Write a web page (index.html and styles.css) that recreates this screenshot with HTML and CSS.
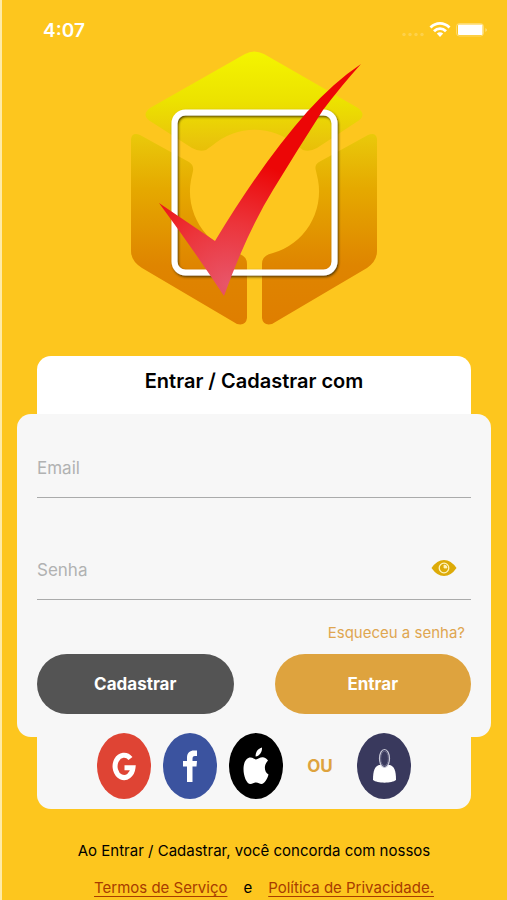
FILE: index.html
```html
<!DOCTYPE html>
<html lang="pt-BR">
<head>
<meta charset="utf-8">
<meta name="viewport" content="width=device-width, initial-scale=1">
<title>Entrar / Cadastrar</title>
<link rel="stylesheet" href="styles.css">
</head>
<body>
<header class="status">
  <span class="status-time">4:07</span>
  <svg class="status-icons" viewBox="0 0 88 20" width="88" height="20" aria-hidden="true">
    <g fill="#fff" opacity=".2">
      <circle cx="3" cy="14.500" r="1.700"/><circle cx="9" cy="14.500" r="1.700"/><circle cx="15" cy="14.500" r="1.700"/><circle cx="21" cy="14.500" r="1.700"/>
    </g>
    <g fill="none" stroke="#fff" stroke-width="2.800">
      <path d="M29.500 7.500C35 2 43 2 48.500 7.500"/>
      <path d="M33 11.300C36.500 7.800 41.500 7.800 45 11.300"/>
    </g>
    <path d="M35.800 13.600Q39 11 42.200 13.600L39 17Z" fill="#fff"/>
    <rect x="55.500" y="3.500" width="27" height="12.500" rx="3" fill="none" stroke="#fff" opacity=".35"/>
    <rect x="57" y="4.500" width="24.500" height="10.500" rx="1" fill="#fff"/>
    <path d="M84.500 8Q87 10 84.500 12Z" fill="#fff" opacity=".5"/>
  </svg>
</header>
<main class="screen">
  <svg class="logo" viewBox="119 48 270 280" role="img" aria-label="Logo">
    <defs>
      <linearGradient id="cube" gradientUnits="userSpaceOnUse" x1="0" y1="52" x2="0" y2="325">
        <stop offset="0" stop-color="#f4f400"/>
        <stop offset=".18" stop-color="#ece200"/>
        <stop offset=".32" stop-color="#e9c60a"/>
        <stop offset=".5" stop-color="#e5a900"/>
        <stop offset=".78" stop-color="#df8500"/>
        <stop offset="1" stop-color="#df7e00"/>
      </linearGradient>
      <radialGradient id="tick" gradientUnits="userSpaceOnUse" cx="228" cy="285" r="125">
        <stop offset="0" stop-color="#e8566a"/>
        <stop offset=".5" stop-color="#ec343a"/>
        <stop offset="1" stop-color="#ec0606"/>
      </radialGradient>
      <filter id="shade" x="-10%" y="-10%" width="120%" height="120%">
        <feDropShadow dx="1" dy="1.500" stdDeviation="0.800" flood-color="#3a2a00" flood-opacity=".85"/>
      </filter>
    </defs>
    <g fill="url(#cube)">
      <path d="M245 54Q254 49 264 54L358 108Q367 115 358 121L317 148Q310 152 303 150L296 145A64 64 0 0 0 213 145L206 150Q199 152 192 148L150 121Q141 115 150 108Z"/>
      <path d="M131 139Q132 132 140 135L189 162Q194 165 193 171L191 180A64 64 0 0 0 236 253Q247 255 247 264V318Q246 326 237 324L142 268Q131 261 131 251Z"/>
      <path d="M377 139Q376 132 368 135L319 162Q314 165 316 171L318 180A64 64 0 0 1 273 253Q262 255 262 264V318Q263 326 272 324L367 268Q377 261 377 251Z"/>
    </g>
    <rect x="174.500" y="112.500" width="160" height="160" rx="11" fill="none" stroke="#fff" stroke-width="6" filter="url(#shade)"/>
    <path fill="url(#tick)" d="M361 64Q334 82 307 112Q262 163 215 241L159 203Q193 249 224 296Q247 232 273 190Q298 149 323 110Q342 85 361 64Z"/>
  </svg>

  <form class="card">
    <h1 class="card-title">Entrar / Cadastrar com</h1>
    <div class="panel">
      <div class="field">
        <input type="email" aria-label="Email" placeholder="Email">
      </div>
      <div class="field">
        <input type="password" aria-label="Senha" placeholder="Senha">
        <button class="reveal" type="button" aria-label="Mostrar senha">
          <svg viewBox="0 0 26 18" width="26" height="18">
            <path d="M0.500 9Q6 1 13 1T25.500 9Q20 17 13 17T0.500 9Z" fill="#ddab08"/>
            <circle cx="13" cy="9" r="4.800" fill="#ddab08" stroke="#fff3bd" stroke-width="1.300"/>
            <path d="M13 6V9H16A3 3 0 0 0 13 6Z" fill="#fff3bd" stroke="#fff3bd" stroke-width=".8"/>
          </svg>
        </button>
      </div>
      <a class="forgot" href="#">Esqueceu a senha?</a>
      <div class="actions">
        <button class="btn btn-dark" type="button">Cadastrar</button>
        <button class="btn btn-gold" type="submit">Entrar</button>
      </div>
    </div>
    <div class="social">
      <div class="social-row">
        <button class="round google" type="button" aria-label="Google">
          <svg viewBox="0 0 54 66"><path d="M33.500 25.500A9 11.200 0 1 0 36 34.800H27.500" fill="none" stroke="#fff" stroke-width="5"/></svg>
        </button>
        <button class="round facebook" type="button" aria-label="Facebook">
          <svg viewBox="0 0 54 66"><path d="M24 49V33.500H20V28H24V25C24 19.500 27 17.500 31 17.500H34V23H32C30 23 29.500 24 29.500 26V28H34L33.500 33.500H29.500V49Z" fill="#fff"/></svg>
        </button>
        <button class="round apple" type="button" aria-label="Apple">
          <svg viewBox="0 0 54 66"><path d="M33 14.500C33.300 19 30.500 23 26.600 23.500C26.500 19 29 15.500 33 14.500ZM27 26.500C29 26 31 24 34 24.200C36.500 24.500 38 25.800 39 27.600C34.500 32 35 39 39.500 41.500C38.500 45.500 35.500 51 32.500 51C30.500 51 29.500 49.500 27 49.500S23.500 51 21.500 51C17.500 51 14.500 43 14.500 36C14.500 29 17.500 24.500 21.500 24.500C24 24.500 25.500 26.300 27 26.500Z" fill="#fff"/></svg>
        </button>
        <span class="or">OU</span>
        <button class="round guest" type="button" aria-label="Visitante">
          <svg viewBox="0 0 54 66"><path d="M16 47C16 38 17.500 33.500 22 32H33C37.500 33.500 39 38 39 47C35 50.500 20 50.500 16 47Z" fill="#fff"/><ellipse cx="27.500" cy="25.500" rx="5" ry="9" fill="#39395d" stroke="#c9c9d8" stroke-width="1.200"/><ellipse cx="27.500" cy="25.500" rx="3.800" ry="7.300" fill="none" stroke="#8585a0" stroke-width=".6"/></svg>
        </button>
      </div>
    </div>
  </form>

  <footer class="legal">
    <p>Ao Entrar / Cadastrar, você concorda com nossos</p>
    <p class="legal-links"><a href="#">Termos de Serviço</a><span>e</span><a href="#">Política de Privacidade.</a></p>
  </footer>
</main>
</body>
</html>
```
FILE: styles.css
```css
* {
  box-sizing: border-box;
}

body {
  margin: 0;
  border-left: 2px solid #ffeba6;
  background: #fdc61e;
  color: #000;
  font-family: Inter, "Liberation Sans", sans-serif;
  font-size: 15px;
}

button {
  padding: 0;
  border: 0;
  font: inherit;
  cursor: pointer;
}

svg {
  display: block;
}

.status {
  display: flex;
  align-items: center;
  justify-content: space-between;
  height: 48px;
  padding: 12px 18px 0 41px;
}

.status-time {
  color: #fff;
  font-size: 19px;
  font-weight: 600;
}

.screen {
  padding: 0 16px 0 15px;
}

.logo {
  width: 270px;
  height: 280px;
  margin: 0 auto 28px;
}

.card-title {
  height: 58px;
  margin: 0 20px;
  padding-top: 12px;
  border-radius: 14px 14px 0 0;
  background: #fff;
  font-size: 20px;
  font-weight: 600;
  line-height: 26px;
  text-align: center;
}

.panel {
  display: flex;
  flex-direction: column;
  padding: 24px 20px 23px;
  border-radius: 14px;
  background: #f7f7f7;
}

.field {
  display: flex;
  align-items: center;
  height: 60px;
  padding-right: 14px;
  border-bottom: 1px solid #aaabab;
}

.field + .field {
  margin-top: 42px;
}

.field input {
  flex: 1;
  min-width: 0;
  height: 100%;
  padding: 0;
  border: 0;
  outline: 0;
  background: transparent;
  font: inherit;
  font-size: 17px;
}

.field input::placeholder {
  color: #b1b2b2;
  opacity: 1;
}

.reveal {
  margin-bottom: 4px;
  background: transparent;
}

.forgot {
  align-self: flex-end;
  margin: 21px 6px 9px 0;
  color: #dfa650;
  line-height: 24px;
  text-decoration: none;
}

.actions {
  display: grid;
  grid-template-columns: 1fr 1fr;
  gap: 41px;
}

.btn {
  height: 60px;
  border-radius: 30px;
  color: #fff;
  font-size: 17px;
  font-weight: 700;
}

.btn-dark {
  background: #545454;
}

.btn-gold {
  background: #dea33e;
}

.social {
  height: 72px;
  margin: 0 20px;
  border-radius: 0 0 14px 14px;
  background: #f7f7f7;
}

/* The round buttons reach slightly over the panel's lower edge. */
.social-row {
  position: relative;
  top: -4px;
  display: flex;
  align-items: center;
  justify-content: center;
  gap: 12px;
}

.round {
  width: 54px;
  height: 66px;
  border-radius: 50%;
}

.google {
  background: #df4434;
}

.facebook {
  background: #3b539f;
}

.apple {
  background: #000;
}

.guest {
  background: #39395d;
}

.or {
  margin: 0 12px;
  color: #dea33e;
  font-size: 17px;
  font-weight: 700;
}

.legal {
  padding-top: 30px;
  line-height: 24px;
  text-align: center;
}

.legal p {
  margin: 0;
}

.legal .legal-links {
  display: flex;
  justify-content: center;
  gap: 16px;
  margin-top: 13px;
  padding-left: 20px;
}

.legal a {
  color: #a83c00;
  text-underline-offset: 3px;
}
```
